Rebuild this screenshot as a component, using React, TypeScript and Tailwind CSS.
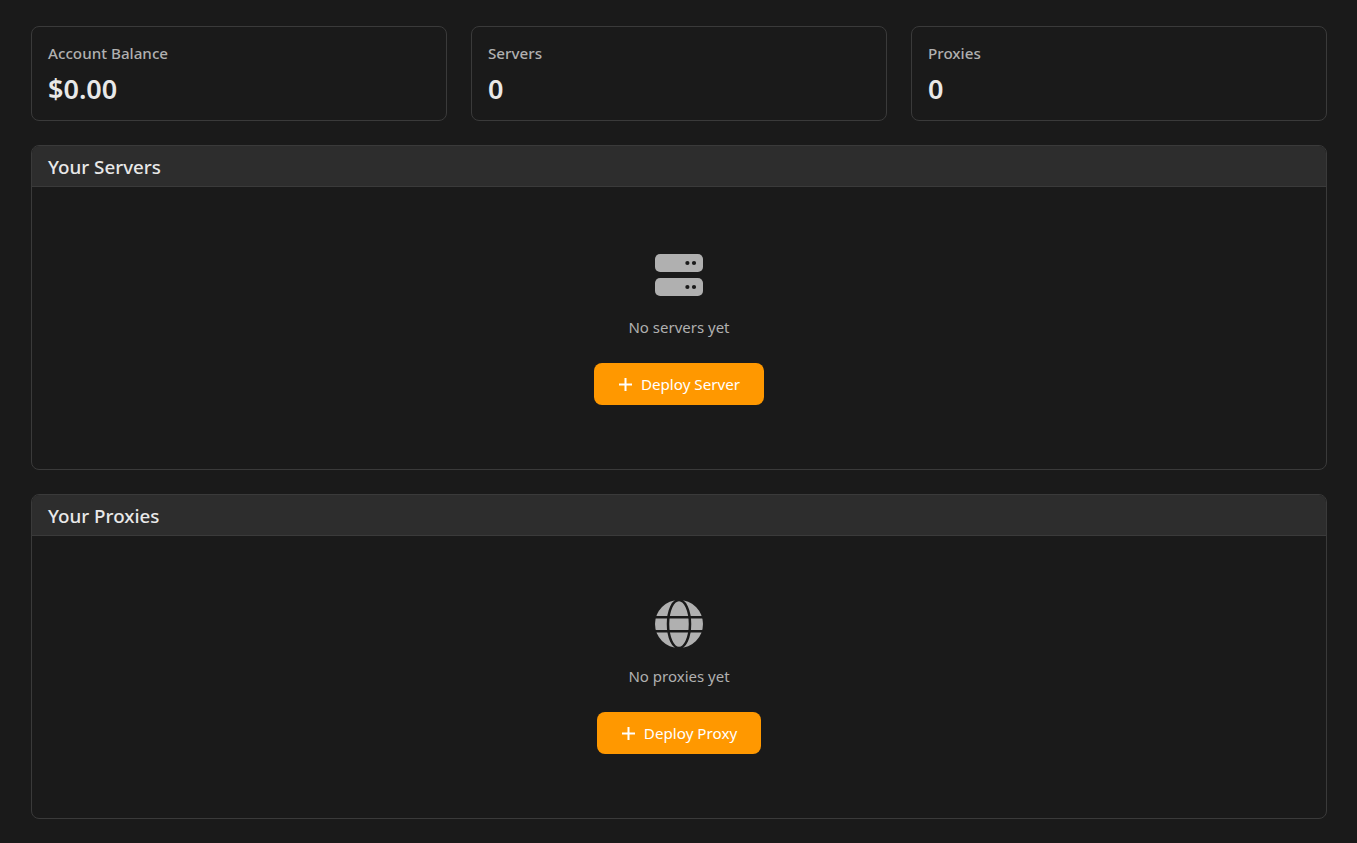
import React from 'react';

const font = "font-['Noto_Sans',sans-serif]";

function StatCard({ label, value }: { label: string; value: string }) {
  return (
    <div className="rounded-lg border border-[#3a3a3a] bg-[#1a1a1a] p-4">
      <div className="text-[15.2px] leading-[21px] font-medium text-[#b0b0b0]">{label}</div>
      <div className="mt-[10px] text-[27px] leading-[30px] font-semibold text-[#e8e8e8]">{value}</div>
    </div>
  );
}

function ServerIcon() {
  return (
    <svg width="48" height="48" viewBox="0 0 16 16" className="block">
      <rect x="0" y="1" width="16" height="6" rx="1.7" fill="#b0b0b0" />
      <rect x="0" y="9" width="16" height="6" rx="1.7" fill="#b0b0b0" />
      <circle cx="10.8" cy="4" r="0.7" fill="#1a1a1a" />
      <circle cx="13" cy="4" r="0.7" fill="#1a1a1a" />
      <circle cx="10.8" cy="12" r="0.7" fill="#1a1a1a" />
      <circle cx="13" cy="12" r="0.7" fill="#1a1a1a" />
    </svg>
  );
}

function GlobeIcon() {
  return (
    <svg width="48" height="48" viewBox="0 0 48 48" className="block">
      <circle cx="24" cy="24" r="24" fill="#b0b0b0" />
      <rect x="0" y="16" width="48" height="2.5" fill="#1a1a1a" />
      <rect x="0" y="30" width="48" height="2.5" fill="#1a1a1a" />
      <ellipse cx="24" cy="24" rx="11" ry="24" fill="none" stroke="#1a1a1a" strokeWidth="2.5" />
    </svg>
  );
}

function PlusIcon() {
  return (
    <svg width="15" height="15" viewBox="0 0 15 15" className="block">
      <path d="M7.5 1v13M1 7.5h13" stroke="#ffffff" strokeWidth="2" fill="none" />
    </svg>
  );
}

function Section({ title, icon, empty, action }: { title: string; icon: React.ReactNode; empty: string; action: string }) {
  return (
    <section className="overflow-hidden rounded-lg border border-[#3a3a3a] bg-[#1a1a1a]">
      <div className="h-[41px] border-b border-[#3a3a3a] bg-[#2d2d2d] px-4 text-[18.8px] leading-[42px] font-medium text-[#e8e8e8]">
        {title}
      </div>
      <div className="flex flex-col items-center py-16">
        {icon}
        <p className="mt-4 text-[15px] leading-6 text-[#b0b0b0]">{empty}</p>
        <button className="mt-6 flex h-[42px] items-center gap-2 rounded-lg bg-[#ff9800] px-6 text-[15.2px] text-white">
          <PlusIcon />
          {action}
        </button>
      </div>
    </section>
  );
}

export default function App() {
  return (
    <div className={`${font} min-h-screen bg-[#1a1a1a] pt-[26px] pr-[30px] pb-6 pl-[31px]`}>
      <div className="grid grid-cols-3 gap-6">
        <StatCard label="Account Balance" value="$0.00" />
        <StatCard label="Servers" value="0" />
        <StatCard label="Proxies" value="0" />
      </div>
      <div className="mt-6 flex flex-col gap-6">
        <Section title="Your Servers" icon={<ServerIcon />} empty="No servers yet" action="Deploy Server" />
        <Section title="Your Proxies" icon={<GlobeIcon />} empty="No proxies yet" action="Deploy Proxy" />
      </div>
    </div>
  );
}
